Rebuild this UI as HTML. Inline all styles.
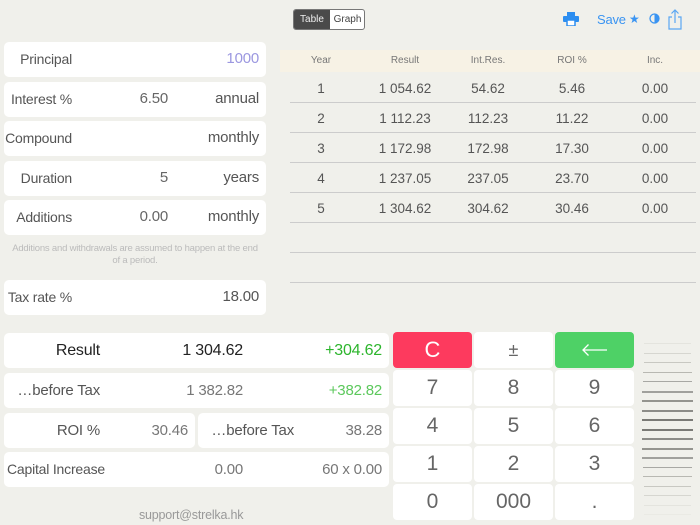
<!DOCTYPE html>
<html><head><meta charset="utf-8"><style>
*{margin:0;padding:0;box-sizing:border-box}
body{width:700px;height:525px;background:#f0f0eb;font-family:"Liberation Sans",sans-serif;color:#555;position:relative;overflow:hidden}
.a{position:absolute}
.card{position:absolute;background:#fff;border-radius:5px}
.t{position:absolute;white-space:nowrap;font-size:14px;letter-spacing:-0.2px}
.r{text-align:right}
.k{position:absolute;background:#fff;border-radius:4px;width:79px;height:36px;text-align:center;line-height:36px;font-size:21px;color:#666}
.hl{position:absolute;left:290px;width:406px;height:1px;background:#ccc}
.c{position:absolute;width:80px;text-align:center;font-size:13.5px}
.sl{position:absolute;height:1px}
</style></head><body>
<div class="a" style="left:293px;top:9px;width:72px;height:21px;border:1px solid #777;border-radius:3px;background:#fff;overflow:hidden">
<div class="a" style="left:0;top:0;width:36px;height:19px;background:#4a4a4a;color:#eee;font-size:10px;line-height:19px;text-align:center">Table</div>
<div class="a" style="left:36px;top:0;width:35px;height:19px;color:#444;font-size:10px;line-height:19px;text-align:center">Graph</div></div>
<svg class="a" style="left:563px;top:12px" width="16" height="14"><rect x="4" y="0" width="8" height="4" fill="#2d8ef0"/><rect x="0" y="4" width="16" height="6" rx="1" fill="#2d8ef0"/><rect x="4" y="8" width="8" height="6" fill="#fff" stroke="#2d8ef0" stroke-width="1.5"/></svg>
<div class="t" style="left:597px;top:12px;color:#3a94f2;font-size:13px">Save</div>
<div class="t" style="left:629px;top:12px;color:#3a94f2;font-size:12px">★</div>
<svg class="a" style="left:649px;top:13px" width="11" height="11"><circle cx="5.5" cy="5.5" r="4.5" fill="none" stroke="#3a94f2" stroke-width="1.3"/><path d="M5.5 1A4.5 4.5 0 0 1 5.5 10Z" fill="#3a94f2"/></svg>
<svg class="a" style="left:667px;top:9px" width="16" height="21" fill="none" stroke="#5aa7f3" stroke-width="1.2"><path d="M5 8H2V20H14V8H11M8 14V1M4.5 4.5L8 1L11.5 4.5"/></svg>
<div class="card" style="left:4px;top:42px;width:262px;height:35px"></div>
<div class="card" style="left:4px;top:82px;width:262px;height:35px"></div>
<div class="card" style="left:4px;top:121px;width:262px;height:35px"></div>
<div class="card" style="left:4px;top:161px;width:262px;height:35px"></div>
<div class="card" style="left:4px;top:200px;width:262px;height:35px"></div>
<div class="card" style="left:4px;top:280px;width:262px;height:35px"></div>
<div class="t r" style="right:628px;top:51px">Principal</div>
<div class="t r" style="right:441px;top:50px;color:#9b97e0;font-size:15px">1000</div>
<div class="t r" style="right:628px;top:91px">Interest %</div>
<div class="t r" style="right:532px;top:90px;color:#666;font-size:15px">6.50</div>
<div class="t r" style="right:441px;top:90px;font-size:15px">annual</div>
<div class="t r" style="right:628px;top:130px">Compound</div>
<div class="t r" style="right:441px;top:129px;font-size:15px">monthly</div>
<div class="t r" style="right:628px;top:170px">Duration</div>
<div class="t r" style="right:532px;top:169px;color:#666;font-size:15px">5</div>
<div class="t r" style="right:441px;top:169px;font-size:15px">years</div>
<div class="t r" style="right:628px;top:209px">Additions</div>
<div class="t r" style="right:532px;top:208px;color:#666;font-size:15px">0.00</div>
<div class="t r" style="right:441px;top:208px;font-size:15px">monthly</div>
<div class="a" style="left:8px;top:243px;width:254px;text-align:center;font-size:9.5px;line-height:12px;color:#bbb;letter-spacing:-0.2px">Additions and withdrawals are assumed to happen at the end of a period.</div>
<div class="t r" style="right:628px;top:289px">Tax rate %</div>
<div class="t r" style="right:441px;top:288px;font-size:15px">18.00</div>
<div class="card" style="left:4px;top:333px;width:385px;height:35px"></div>
<div class="card" style="left:4px;top:373px;width:385px;height:35px"></div>
<div class="card" style="left:4px;top:413px;width:191px;height:35px"></div>
<div class="card" style="left:198px;top:413px;width:191px;height:35px"></div>
<div class="card" style="left:4px;top:452px;width:385px;height:35px"></div>
<div class="t r" style="right:600px;top:342px;color:#222;font-size:16px">Result</div>
<div class="t r" style="right:457px;top:342px;color:#222;font-size:16px">1 304.62</div>
<div class="t r" style="right:318px;top:342px;color:#2db52d;font-size:16px">+304.62</div>
<div class="t r" style="right:600px;top:382px;font-size:15px">…before Tax</div>
<div class="t r" style="right:457px;top:382px;color:#777;font-size:15px">1 382.82</div>
<div class="t r" style="right:318px;top:382px;color:#5cc85c;font-size:15px">+382.82</div>
<div class="t r" style="right:600px;top:422px;font-size:15px">ROI %</div>
<div class="t r" style="right:512px;top:422px;color:#777;font-size:15px">30.46</div>
<div class="t r" style="right:406px;top:422px;font-size:15px">…before Tax</div>
<div class="t r" style="right:318px;top:422px;color:#777;font-size:15px">38.28</div>
<div class="t" style="left:7px;top:461px">Capital Increase</div>
<div class="t r" style="right:457px;top:461px;color:#777;font-size:15px">0.00</div>
<div class="t r" style="right:318px;top:461px;color:#777;font-size:15px">60 x 0.00</div>
<div class="t" style="left:139px;top:508px;font-size:12.5px;color:#999">support@strelka.hk</div>
<div class="a" style="left:280px;top:50px;width:420px;height:22px;background:#f7f2e5"></div>
<div class="c" style="left:281px;top:55px;font-size:10px;color:#777">Year</div>
<div class="c" style="left:365px;top:55px;font-size:10px;color:#777">Result</div>
<div class="c" style="left:448px;top:55px;font-size:10px;color:#777">Int.Res.</div>
<div class="c" style="left:532px;top:55px;font-size:10px;color:#777">ROI %</div>
<div class="c" style="left:615px;top:55px;font-size:10px;color:#777">Inc.</div>
<div class="c" style="left:281px;top:81px">1</div><div class="c" style="left:365px;top:81px">1 054.62</div><div class="c" style="left:448px;top:81px">54.62</div><div class="c" style="left:532px;top:81px">5.46</div><div class="c" style="left:615px;top:81px">0.00</div>
<div class="c" style="left:281px;top:111px">2</div><div class="c" style="left:365px;top:111px">1 112.23</div><div class="c" style="left:448px;top:111px">112.23</div><div class="c" style="left:532px;top:111px">11.22</div><div class="c" style="left:615px;top:111px">0.00</div>
<div class="c" style="left:281px;top:141px">3</div><div class="c" style="left:365px;top:141px">1 172.98</div><div class="c" style="left:448px;top:141px">172.98</div><div class="c" style="left:532px;top:141px">17.30</div><div class="c" style="left:615px;top:141px">0.00</div>
<div class="c" style="left:281px;top:171px">4</div><div class="c" style="left:365px;top:171px">1 237.05</div><div class="c" style="left:448px;top:171px">237.05</div><div class="c" style="left:532px;top:171px">23.70</div><div class="c" style="left:615px;top:171px">0.00</div>
<div class="c" style="left:281px;top:201px">5</div><div class="c" style="left:365px;top:201px">1 304.62</div><div class="c" style="left:448px;top:201px">304.62</div><div class="c" style="left:532px;top:201px">30.46</div><div class="c" style="left:615px;top:201px">0.00</div>
<div class="hl" style="top:102px"></div><div class="hl" style="top:132px"></div><div class="hl" style="top:162px"></div><div class="hl" style="top:192px"></div><div class="hl" style="top:222px"></div><div class="hl" style="top:252px"></div><div class="hl" style="top:282px"></div>
<div class="k" style="left:393px;top:332px;background:#fd3a5e;color:#fff;font-size:22px">C</div>
<div class="k" style="left:474px;top:332px;font-size:18px">±</div>
<div class="k" style="left:555px;top:332px;background:#4ed166"><svg style="margin-top:12px" width="26" height="12" fill="none" stroke="#fff" stroke-width="1.3"><path d="M1 6H25M6.5 0.5L1 6L6.5 11.5"/></svg></div>
<div class="k" style="left:393px;top:370px">7</div><div class="k" style="left:474px;top:370px">8</div><div class="k" style="left:555px;top:370px">9</div>
<div class="k" style="left:393px;top:408px">4</div><div class="k" style="left:474px;top:408px">5</div><div class="k" style="left:555px;top:408px">6</div>
<div class="k" style="left:393px;top:446px">1</div><div class="k" style="left:474px;top:446px">2</div><div class="k" style="left:555px;top:446px">3</div>
<div class="k" style="left:393px;top:484px">0</div><div class="k" style="left:474px;top:484px">000</div><div class="k" style="left:555px;top:484px">.</div>
<div class="sl" style="left:644px;top:343px;width:47px;background:#e4e4de"></div>
<div class="sl" style="left:644px;top:353px;width:47px;background:#d6d6d0"></div>
<div class="sl" style="left:644px;top:362px;width:47px;background:#c8c8c2"></div>
<div class="sl" style="left:643px;top:372px;width:49px;background:#b8b8b2"></div>
<div class="sl" style="left:643px;top:381px;width:49px;background:#a8a8a4"></div>
<div class="sl" style="left:642px;top:391px;width:51px;height:2px;background:#a0a09c"></div>
<div class="sl" style="left:642px;top:400px;width:51px;height:2px;background:#94948f"></div>
<div class="sl" style="left:642px;top:410px;width:51px;height:2px;background:#8c8c88"></div>
<div class="sl" style="left:642px;top:419px;width:51px;height:2px;background:#7a7a76"></div>
<div class="sl" style="left:642px;top:429px;width:51px;height:2px;background:#7a7a76"></div>
<div class="sl" style="left:642px;top:438px;width:51px;height:2px;background:#8c8c88"></div>
<div class="sl" style="left:642px;top:448px;width:51px;height:2px;background:#94948f"></div>
<div class="sl" style="left:642px;top:457px;width:51px;height:2px;background:#a0a09c"></div>
<div class="sl" style="left:643px;top:467px;width:49px;background:#a8a8a4"></div>
<div class="sl" style="left:643px;top:476px;width:49px;background:#b8b8b2"></div>
<div class="sl" style="left:644px;top:486px;width:47px;background:#c8c8c2"></div>
<div class="sl" style="left:644px;top:495px;width:47px;background:#d6d6d0"></div>
<div class="sl" style="left:644px;top:505px;width:47px;background:#e4e4de"></div>
<div class="sl" style="left:644px;top:514px;width:47px;background:#eaeae4"></div>
</body></html>
